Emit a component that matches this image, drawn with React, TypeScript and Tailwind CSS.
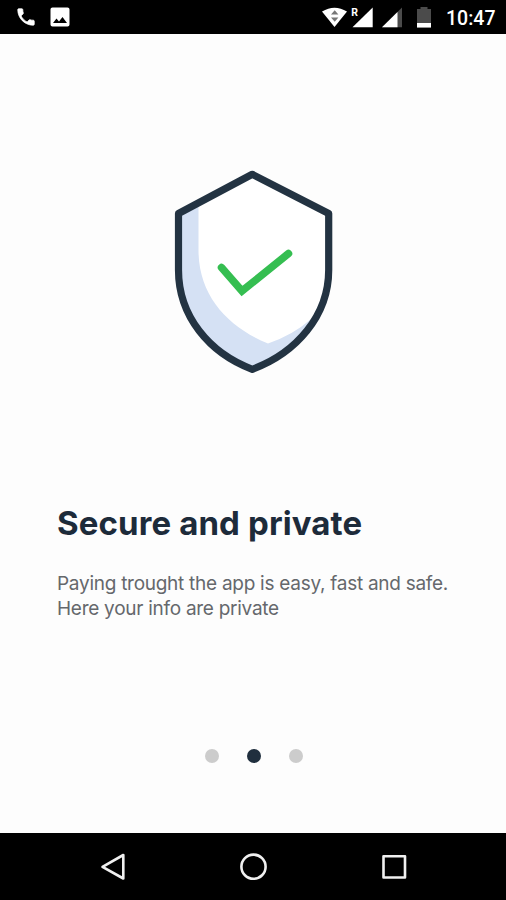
function StatusBar() {
  return (
    <header className="flex h-[34px] shrink-0 items-center bg-black">
      <svg className="ml-[15px] h-[22px] w-[22px]" viewBox="0 0 24 24" fill="#fff">
        <path d="M6.62 10.79c1.44 2.83 3.76 5.14 6.59 6.59l2.2-2.2c.27-.27.67-.36 1.02-.24 1.12.37 2.33.57 3.57.57.55 0 1 .45 1 1V20c0 .55-.45 1-1 1C10.61 21 3 13.39 3 4c0-.55.45-1 1-1h3.5c.55 0 1 .45 1 1 0 1.25.2 2.45.57 3.57.11.35.03.74-.25 1.02l-2.2 2.2z" stroke="#fff" strokeWidth="0.8" />
      </svg>
      <svg className="ml-[11px] h-[24px] w-[24px]" viewBox="0 0 24 24" fill="#fff">
        <path d="M21.5 19.5v-15c0-1.1-.9-2-2-2h-15c-1.1 0-2 .9-2 2v15c0 1.1.9 2 2 2h15c1.1 0 2-.9 2-2zM8.5 13.500l2.500 3 3.500-4.500 4.500 6H5z" fillRule="evenodd" />
      </svg>
      <svg className="ml-auto h-[24px] w-[114px]" viewBox="320 5 114 24">
        <path d="M322 11.500Q334.500 3.800 347 11.500L334.500 27Z" fill="#fff" />
        <path d="M331 14.500l3.700-4.300 3.700 4.300zM331 17.500h7.400l-3.700 4.300z" fill="#777" />
        <text x="351.300" y="16" fill="#fff" fontFamily="Roboto, sans-serif" fontSize="10.500" fontWeight="700">R</text>
        <path d="M372.700 7.500V27.300H352.500Z" fill="#fff" />
        <path d="M402 7.500V27.300H382Z" fill="#4b4b4b" />
        <path d="M397.500 12V27.300H382Z" fill="#fff" />
        <path d="M420.500 7h7v2h3.500v18.500h-14V9h3.500z" fill="#4b4b4b" />
        <path d="M417 23h14v4.500h-14z" fill="#fff" />
      </svg>
      <time className="ml-[12px] w-[60px] whitespace-nowrap pt-[3px] font-['Roboto',sans-serif] text-[19.500px] font-medium leading-6 text-white">10:47</time>
    </header>
  );
}

function ShieldIllustration() {
  return (
    <svg className="mx-auto mt-[132px] h-[212px] w-[166px] shrink-0" viewBox="170 166 166 212" fill="none">
      <path d="M252.300 174.300L328.700 213.500V270C328.700 316 296 353 252.300 369.300C209 353 178.500 316 178.500 270V213.500Z" fill="#fff" />
      <path d="M178.500 213.500L198.500 203V250C198.500 296 228 327 268 343.500Q293 335 311 319C298 344 279 359 252.500 369.500C209 353 178.500 316 178.500 270Z" fill="#d5e1f4" />
      <path d="M252.300 174.300L328.700 213.500V270C328.700 316 296 353 252.300 369.300C209 353 178.500 316 178.500 270V213.500Z" stroke="#233342" strokeWidth="7.200" strokeLinejoin="round" />
      <path d="M221.500 267.500L242 291L288.500 253.500" stroke="#35be51" strokeWidth="7.500" strokeLinecap="round" strokeLinejoin="miter" />
    </svg>
  );
}

function NavigationBar() {
  return (
    <nav className="flex h-[67px] shrink-0 items-start justify-between bg-black px-[98px] pt-[18px]">
      <svg className="h-8 w-8" viewBox="98 851 32 32" fill="none" stroke="#f0f0f0" strokeWidth="2.600" strokeLinejoin="round">
        <path d="M102.500 866.800L123.300 855V878.500Z" />
      </svg>
      <svg className="h-8 w-8" viewBox="237 851 32 32" fill="none" stroke="#f0f0f0" strokeWidth="2.600">
        <circle cx="253.500" cy="866.700" r="12.100" />
      </svg>
      <svg className="h-8 w-8" viewBox="376 851 32 32" fill="none" stroke="#f0f0f0" strokeWidth="2.600" strokeLinejoin="round">
        <path d="M383.500 856.300H405V877.500H383.500Z" />
      </svg>
    </nav>
  );
}

export default function App() {
  return (
    <div className="flex h-[900px] w-full flex-col overflow-hidden bg-[#fdfdfd]">
      <StatusBar />
      <main className="flex min-h-0 flex-1 flex-col">
        <ShieldIllustration />
        <section className="mt-[125px] pl-[57px]">
          <h1 className="whitespace-nowrap font-['Inter',sans-serif] text-[33px] font-bold leading-10 tracking-[0.120px] text-[#1d2b3a]">
            Secure and private
          </h1>
          <p className="mt-[29px] whitespace-nowrap font-['Inter',sans-serif] text-[19px] font-normal leading-[24.500px] tracking-[-0.270px] text-[#65686c]">
            Paying trought the app is easy, fast and safe.
            <br />
            Here your info are private
          </p>
        </section>
        <div className="mt-auto mb-[70px] flex justify-center gap-[28px] pl-px">
          <span className="h-[14px] w-[14px] rounded-full bg-[#cccccc]" />
          <span className="h-[14px] w-[14px] rounded-full bg-[#202f3e]" />
          <span className="h-[14px] w-[14px] rounded-full bg-[#cccccc]" />
        </div>
      </main>
      <NavigationBar />
    </div>
  );
}
